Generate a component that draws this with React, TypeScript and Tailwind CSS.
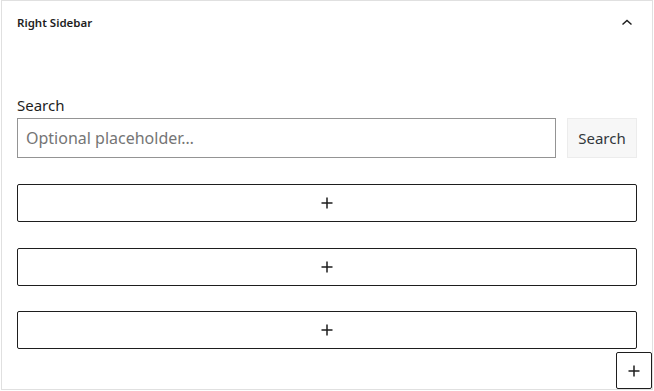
import React from "react";

function Plus({ size = 14 }: { size?: number }) {
  return (
    <svg width={size} height={size} viewBox="0 0 14 14" fill="none">
      <path d="M7 1.5v11M1.5 7h11" stroke="#1e1e1e" strokeWidth="1.5" />
    </svg>
  );
}

function Appender() {
  return (
    <div className="h-[38px] w-full border border-[#1e1e1e] rounded-[2px] flex items-center justify-center bg-white">
      <Plus />
    </div>
  );
}

export default function App() {
  return (
    <div
      className="w-[654px] h-[391px] bg-white relative"
      style={{ fontFamily: '"Noto Sans", "Open Sans", sans-serif' }}
    >
      <div className="ml-[1px] w-[652px] h-[390px] border border-[#e0e0e0] flex flex-col">
        <div className="h-[44px] flex items-center justify-between pl-[15px] pr-[13px]">
          <span className="text-[11.5px] font-semibold text-[#1e1e1e]">Right Sidebar</span>
          <svg width="24" height="24" viewBox="0 0 24 24" fill="none">
            <path d="M7.5 13.5 12 9.5l4.5 4" stroke="#1e1e1e" strokeWidth="1.5" />
          </svg>
        </div>
        <div className="px-[15px] pt-[50px] flex flex-col">
          <label className="text-[15px] leading-[20px] text-[#1e1e1e] mb-[3px]">Search</label>
          <div className="flex gap-[11px]">
            <div className="flex-1 h-[40px] border border-[#949494] flex items-center px-[8px] text-[16px] text-[#757575]">
              Optional placeholder…
            </div>
            <button className="w-[70px] h-[40px] bg-[#f7f7f7] border border-[#ececec] text-[15px] text-[#32373c]">
              Search
            </button>
          </div>
          <div className="mt-[26px] flex flex-col gap-[25.5px]">
            <Appender />
            <Appender />
            <Appender />
          </div>
        </div>
      </div>
      <div className="absolute left-[616px] top-[352px] w-[36px] h-[37px] border border-[#1e1e1e] rounded-[2px] bg-white flex items-center justify-center">
        <Plus />
      </div>
    </div>
  );
}
